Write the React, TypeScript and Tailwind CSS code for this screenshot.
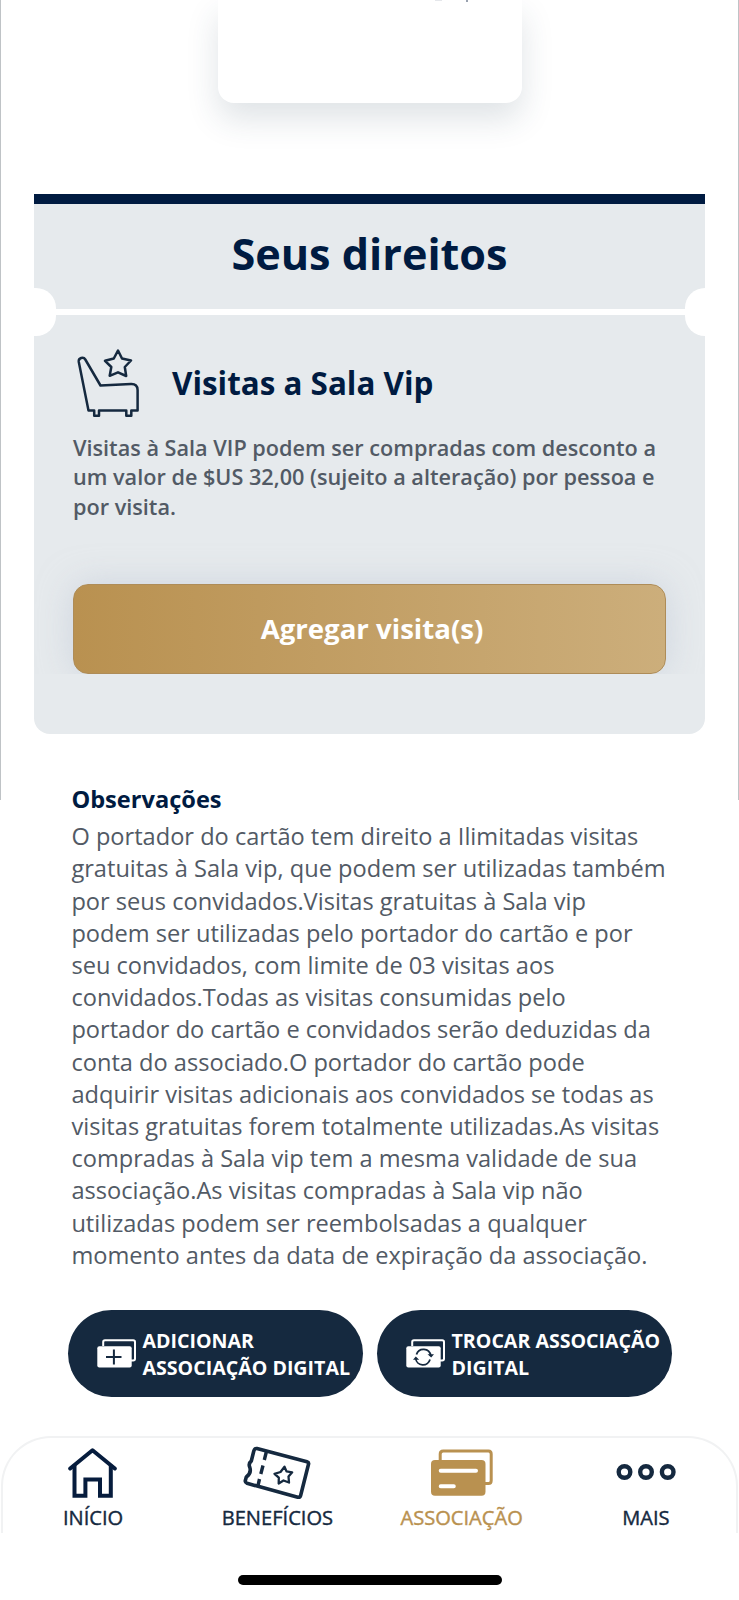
const notes = [
  "O portador do cartão tem direito a Ilimitadas visitas",
  "gratuitas à Sala vip, que podem ser utilizadas também",
  "por seus convidados.Visitas gratuitas à Sala vip",
  "podem ser utilizadas pelo portador do cartão e por",
  "seu convidados, com limite de 03 visitas aos",
  "convidados.Todas as visitas consumidas pelo",
  "portador do cartão e convidados serão deduzidas da",
  "conta do associado.O portador do cartão pode",
  "adquirir visitas adicionais aos convidados se todas as",
  "visitas gratuitas forem totalmente utilizadas.As visitas",
  "compradas à Sala vip tem a mesma validade de sua",
  "associação.As visitas compradas à Sala vip não",
  "utilizadas podem ser reembolsadas a qualquer",
  "momento antes da data de expiração da associação.",
];

const benefit = [
  "Visitas à Sala VIP podem ser compradas com desconto a",
  "um valor de $US 32,00 (sujeito a alteração) por pessoa e",
  "por visita.",
];

function LoungeIcon() {
  return (
    <svg width="64" height="70" viewBox="0 0 64 70" fill="none" stroke="#15293f" strokeWidth="2.5" strokeLinejoin="round">
      <path d="M11.5 61.5 L1.8 13 C1.2 8.7 6.5 7.5 8.3 10.5 L23.5 36.5 L54 35.1 C58.5 34.9 60.6 37.1 60.6 41 V61.5 H54.3 V66.7 H49.3 V61.5 H22 V66.7 H17.2 V61.5 Z" />
      <path d="M41 1.5 L45 9.5 L54 11.5 L47.8 18 L49.2 27 L41 23.3 L32.7 26.8 L34.3 18 L28 11.8 L36.8 9.5 Z" />
    </svg>
  );
}

function CardsIcon({ children }: { children: React.ReactNode }) {
  return (
    <svg width="40" height="29" viewBox="0 0 40 29" fill="none" className="shrink-0">
      <path d="M6.2 7 V3 Q6.2 1.2 8 1.2 H36.2 Q38 1.2 38 3 V19.7 Q38 21.4 36.2 21.4 H34" stroke="#fff" strokeWidth="2" />
      <rect x="0.3" y="7.2" width="34.4" height="21.3" rx="2" fill="#fff" />
      {children}
    </svg>
  );
}

function HomeIcon() {
  return (
    <svg width="50" height="52" viewBox="0 0 50 52" fill="none" stroke="#061c3d" strokeWidth="4" strokeLinecap="round" strokeLinejoin="round">
      <path d="M2.2 21.5 L24.5 3.3 L46.8 21.5" />
      <path d="M6.5 19 V48.8 H17.4 V32.5 H32 V48.8 H42.8 V19" strokeLinejoin="miter" />
    </svg>
  );
}

function TicketIcon() {
  return (
    <svg width="68" height="54" viewBox="0 0 68 54" fill="none" stroke="#15293f" strokeWidth="3.6" strokeLinejoin="round">
      <path d="M14 2.6 L64 15.7 Q66 16.3 65.5 18.3 L57.7 49.3 Q57.1 51.7 54.8 51.2 L4 37.3 Q1.8 36.5 2.4 34.3 L3.3 31 Q8.8 27 6.7 21 Q5.2 17.5 8.3 15 L10.8 5 Q11.7 2.1 14 2.6 Z" />
      <path d="M23.3 6 L21.3 14 M20 19.5 L17.8 28 M16.5 33 L15 39.5" strokeWidth="3.4" />
      <path d="M41.5 20.7 L43.5 25.4 L49.2 26.3 L45.5 30.5 L46 36.5 L40.5 34.5 L35.7 37.5 L35.8 31.7 L31.5 27.8 L37.5 26 Z" strokeWidth="2.3" />
    </svg>
  );
}

function MembershipIcon() {
  return (
    <svg width="64" height="48" viewBox="0 0 64 48" fill="none">
      <path d="M10.2 11 V5 Q10.2 2 13.2 2 H58.5 Q61.2 2 61.2 5 V31.5 Q61.2 34.5 58.5 34.5 H54" stroke="#b99150" strokeWidth="3" />
      <rect x="1" y="11" width="54.5" height="35.7" rx="4" fill="#b99150" />
      <path d="M10.7 21.7 H46 M10.7 37.2 H23.8" stroke="#fff" strokeWidth="4" strokeLinecap="round" />
    </svg>
  );
}

function MoreIcon() {
  return (
    <svg width="60" height="20" viewBox="0 0 60 20" fill="none" stroke="#15293f" strokeWidth="4.4" className="mb-[3px]">
      <circle cx="8.5" cy="10" r="5.8" />
      <circle cx="30" cy="10" r="5.8" />
      <circle cx="51.7" cy="10" r="5.8" />
    </svg>
  );
}

const navItems = [
  { label: "INÍCIO", icon: <HomeIcon />, color: "text-[#15293f]" },
  { label: "BENEFÍCIOS", icon: <TicketIcon />, color: "text-[#15293f]" },
  { label: "ASSOCIAÇÃO", icon: <MembershipIcon />, color: "text-[#b99150]" },
  { label: "MAIS", icon: <MoreIcon />, color: "text-[#15293f]" },
];

function Rights() {
  return (
    <section className="relative ml-[34px] mt-[91px] h-[540px] w-[671px] overflow-hidden rounded-b-[16px] border-t-[10px] border-[#001b41] bg-[#e6eaed]">
      <h1 className="flex h-[105px] items-center justify-center pb-[4px] text-[43.2px] font-bold text-[#001b41]">
        Seus direitos
      </h1>
      <div className="h-[6px] bg-white" />
      <span className="absolute -left-[20px] top-[84px] h-[48px] w-[42px] rounded-[20px] bg-white" />
      <span className="absolute -right-[22px] top-[84px] h-[48px] w-[42px] rounded-[20px] bg-white" />
      <div className="overflow-hidden px-[39px]">
        <div className="mt-[34px] flex h-[70px] items-center pl-[4px]">
          <LoungeIcon />
          <h2 className="ml-[31px] whitespace-nowrap pb-[2px] text-[31.4px] font-bold text-[#001b41]">Visitas a Sala Vip</h2>
        </div>
        <div className="mt-[14px] whitespace-nowrap text-[21.66px] font-semibold leading-[29.3px] text-[#525a65]">
          {benefit.map((line) => (
            <p key={line}>{line}</p>
          ))}
        </div>
        <button className="mt-[63px] block h-[90px] w-full rounded-[15px] border border-[#ae8c58] bg-linear-to-r from-[#b99150] to-[#ccae7b] pl-[5px] text-[27.6px] font-bold text-white shadow-[0_0_34px_rgba(190,198,212,0.6)]">
          Agregar visita(s)
        </button>
      </div>
    </section>
  );
}

export default function App() {
  return (
    <div className="relative flex h-[1600px] w-[739px] flex-col overflow-hidden bg-white font-['Open_Sans',sans-serif]">
      <div className="absolute inset-x-0 top-0 h-[800px] border-x border-[#bfc3c6]" />
      <div className="mx-auto flex h-[103px] w-[304px] shrink-0 gap-[24px] rounded-b-[16px] bg-white pl-[217px] shadow-[0_16px_32px_rgba(40,65,85,0.15)]">
        <span className="h-px w-[7px] bg-gray-200" />
        <span className="h-[2px] w-[2px] bg-gray-400" />
      </div>
      <Rights />

      <section className="mt-[49px] whitespace-nowrap pl-[71.4px]">
        <h3 className="text-[23.6px] font-bold leading-[32px] text-[#001b41]">Observações</h3>
        <div className="mt-[5.3px] text-[23.62px] leading-[32.18px] text-[#525a65]">
          {notes.map((line) => (
            <p key={line}>{line}</p>
          ))}
        </div>
      </section>

      <div className="mt-[38.7px] flex gap-[14px] pl-[67.5px]">
        <button className="flex h-[87px] w-[295px] items-center rounded-full bg-[#15293f] pl-[29px] text-left text-[19.6px] font-bold leading-[26.2px] text-white">
          <CardsIcon>
            <path d="M9 18 H24.5 M16.9 10.5 V25.5" stroke="#15293f" strokeWidth="2" />
          </CardsIcon>
          <span className="ml-[6px] whitespace-nowrap pt-[3px]">
            ADICIONAR
            <br />
            ASSOCIAÇÃO DIGITAL
          </span>
        </button>
        <button className="flex h-[87px] w-[295px] items-center rounded-full bg-[#15293f] pl-[29px] text-left text-[19.6px] font-bold leading-[26.2px] text-white">
          <CardsIcon>
            <path d="M10.5 15.5 A7.3 7.3 0 0 1 24.7 16.5 M24 20.5 A7.3 7.3 0 0 1 9.7 19.5" stroke="#15293f" strokeWidth="1.8" />
            <path d="M21.5 15.2 H28 L25.2 18.6 Z M7 20.8 L9.8 17.4 L13.2 20.8 Z" fill="#15293f" />
          </CardsIcon>
          <span className="ml-[6px] whitespace-nowrap pt-[3px]">
            TROCAR ASSOCIAÇÃO
            <br />
            DIGITAL
          </span>
        </button>
      </div>

      <nav className="absolute inset-x-px top-[1436px] h-[97px] rounded-t-[50px] border-x-2 border-t-2 border-[#f1f2f3]">
        <div className="-mx-[2px] grid grid-cols-4">
          {navItems.map((item) => (
            <a key={item.label} className={`flex flex-col items-center ${item.color}`}>
              <span className="mt-[7px] flex h-[56px] items-center">{item.icon}</span>
              <span className="mt-[3px] text-[20.1px] leading-[28px] [-webkit-text-stroke:0.4px_currentColor]">
                {item.label}
              </span>
            </a>
          ))}
        </div>
      </nav>
      <div className="absolute left-[238px] top-[1575px] h-[10px] w-[264px] rounded-full bg-black" />
    </div>
  );
}
